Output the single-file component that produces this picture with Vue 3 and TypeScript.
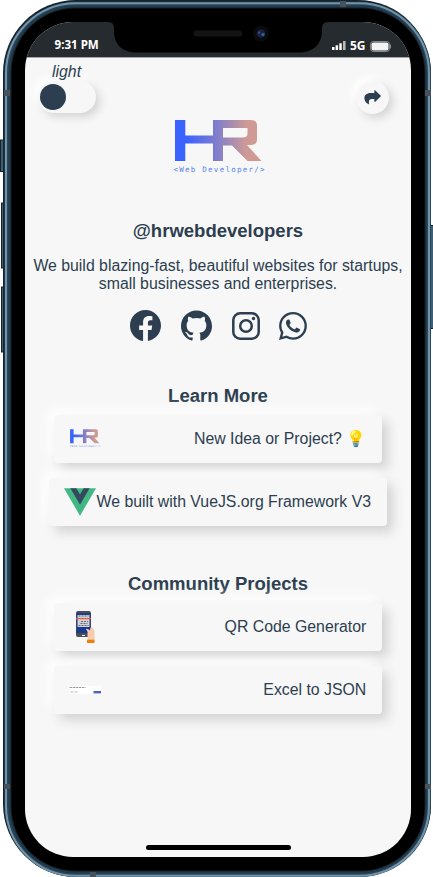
<script setup lang="ts">
import { ref } from 'vue'

interface LinkItem {
  label: string
  icon: 'hr' | 'vue' | 'qr' | 'json'
  wide?: boolean
}

interface Section {
  title: string
  links: LinkItem[]
}

const dark = ref(false)

const sections: Section[] = [
  {
    title: 'Learn More',
    links: [
      { label: 'New Idea or Project? 💡', icon: 'hr' },
      { label: 'We built with VueJS.org Framework V3', icon: 'vue', wide: true },
    ],
  },
  {
    title: 'Community Projects',
    links: [
      { label: 'QR Code Generator', icon: 'qr' },
      { label: 'Excel to JSON', icon: 'json' },
    ],
  },
]
</script>

<template>
  <div class="device">
    <svg class="frame" viewBox="0 0 433 877" aria-hidden="true">
      <defs>
        <linearGradient id="brand" gradientUnits="userSpaceOnUse" x1="4" y1="0" x2="80" y2="0">
          <stop offset="0" stop-color="#3a62ff" />
          <stop offset="0.13" stop-color="#3a62ff" />
          <stop offset="0.55" stop-color="#8580c8" />
          <stop offset="0.92" stop-color="#cf9a94" />
          <stop offset="1" stop-color="#cf9a94" />
        </linearGradient>
        <symbol id="hr-mark" viewBox="0 0 92 56">
          <path
            fill="url(#brand)"
            fill-rule="evenodd"
            d="M2 1h10.300v15.500H40V1h38q6 0 6 5.500V20q0 6-6 6h-4l14.500 16H74.500L59 26.500h-9V42H40V24.500H12.300V42H2zM50 9v9.500h20q4.500 0 4.500-4V9z"
          />
          <text x="0.500" y="53" font-size="7.500" textLength="91" font-family="'DejaVu Sans Mono', monospace" fill="#5584ee">&lt;Web Developer/&gt;</text>
        </symbol>
      </defs>
      <g fill="#3f5f75" stroke="#16222b" stroke-width="1">
        <rect x="0.500" y="140" width="5" height="31.500" />
        <rect x="1.500" y="203" width="4" height="65" />
        <rect x="1.500" y="287" width="4" height="65" />
        <rect x="430" y="225.500" width="4" height="103" />
      </g>
      <rect x="3" y="0" width="428" height="877" rx="73" fill="#17242e" />
      <rect x="4.500" y="1.800" width="426.500" height="875.200" rx="71.500" fill="#27485d" />
      <rect x="6" y="3.300" width="423" height="872.400" rx="70" fill="none" stroke="#7593a7" stroke-width="2" />
      <rect x="8.500" y="5.500" width="418.500" height="868" rx="67" fill="#213b4d" />
      <rect x="10.500" y="7.500" width="415" height="864" rx="65" fill="#1b1d20" />
      <rect x="11.500" y="8.500" width="413" height="862" rx="64" fill="#000" />
      <g fill="#46535c">
        <rect x="340" y="1" width="6" height="6" />
        <rect x="4" y="90" width="6" height="6" />
        <rect x="425" y="90" width="6" height="6" />
        <rect x="4" y="784" width="6" height="5" />
        <rect x="425" y="784" width="6" height="5" />
        <rect x="90" y="872" width="6" height="5" />
      </g>
    </svg>

    <div class="screen">
      <div class="status">
        <span class="clock">9:31 PM</span>
        <svg class="notch" viewBox="0 0 220 31" aria-hidden="true">
          <path d="M0 0Q6 0 6 6V9C6 23 15 30.500 29 30.500H191C205 30.500 214 22 214 9V6Q214 0 220 0z" />
          <rect x="85.500" y="8.500" width="49" height="6" rx="3" fill="#141414" />
          <circle cx="153" cy="11.500" r="8" fill="#0b0b0e" />
          <circle cx="153" cy="11.500" r="4.300" fill="#18233f" />
          <circle cx="155" cy="12.500" r="1.600" fill="#28689a" />
          <circle cx="151" cy="10.500" r="1.300" fill="#493f80" />
        </svg>
        <div class="signals">
          <svg width="14" height="9" viewBox="0 0 14 9" aria-hidden="true">
            <path fill="#fff" d="M0 6h2.500v3H0zM3.600 4.300h2.500V9H3.600zM7.300 2.300h2.500V9H7.300z" />
            <path fill="#b9bbbc" d="M11 0h2.600v9H11z" />
          </svg>
          <span>5G</span>
          <svg width="22" height="11" viewBox="0 0 22 11" aria-hidden="true">
            <rect x="0.500" y="0.500" width="19" height="10" rx="2.800" fill="none" stroke="#85898b" />
            <rect x="1.500" y="1.500" width="17" height="8" rx="1.800" fill="#f3f3f3" />
            <path d="M20.500 3.500v4" stroke="#85898b" />
          </svg>
        </div>
      </div>

      <main class="page">
        <div class="toolbar">
          <div class="theme">
            <em>{{ dark ? 'dark' : 'light' }}</em>
            <button class="toggle" :class="{ on: dark }" aria-label="Theme" @click="dark = !dark"><i></i></button>
          </div>
          <button class="share" aria-label="Share">
            <svg width="17" height="15" viewBox="0 0 17 15">
              <path fill="#2c3e50" d="M10.300.4q.5-.5 1 0l5.300 5.200q.5.500 0 1l-5.300 5.100q-1 .6-1-.6V9H7.800C5.500 9 4.600 10.200 5 13.700c.1.700-.4.700-.8.400C1.500 12.400.2 10 .4 7.700.7 4.700 3.300 3.100 7 3.100h3.300z" />
            </svg>
          </button>
        </div>

        <svg class="logo"><use href="#hr-mark" /></svg>
        <h1>@hrwebdevelopers</h1>
        <p>We build blazing-fast, beautiful websites for startups, small businesses and enterprises.</p>

        <nav class="social">
          <svg class="facebook" viewBox="0 0 16 16" aria-label="Facebook">
            <path d="M16 8.049c0-4.446-3.582-8.050-8-8.050C3.580 0-.002 3.603-.002 8.050c0 4.017 2.926 7.347 6.750 7.951v-5.625h-2.030V8.050H6.750V6.275c0-2.017 1.195-3.131 3.022-3.131.876 0 1.791.157 1.791.157v1.980h-1.009c-.993 0-1.303.621-1.303 1.258v1.510h2.218l-.354 2.326H9.250V16c3.824-.604 6.750-3.934 6.750-7.951z" />
          </svg>
          <svg class="github" viewBox="0 0 24 24" aria-label="GitHub">
            <path d="M12 .297c-6.630 0-12 5.373-12 12 0 5.303 3.438 9.800 8.205 11.385.6.113.82-.258.82-.577 0-.285-.01-1.040-.015-2.040-3.338.724-4.042-1.610-4.042-1.610C4.422 18.070 3.633 17.700 3.633 17.700c-1.087-.744.084-.729.084-.729 1.205.084 1.838 1.236 1.838 1.236 1.070 1.835 2.809 1.305 3.495.998.108-.776.417-1.305.76-1.605-2.665-.3-5.466-1.332-5.466-5.930 0-1.310.465-2.380 1.235-3.220-.135-.303-.54-1.523.105-3.176 0 0 1.005-.322 3.300 1.230.96-.267 1.980-.399 3-.405 1.020.006 2.040.138 3 .405 2.280-1.552 3.285-1.230 3.285-1.230.645 1.653.24 2.873.12 3.176.765.84 1.230 1.910 1.230 3.220 0 4.610-2.805 5.625-5.475 5.920.42.36.81 1.096.81 2.220 0 1.606-.015 2.896-.015 3.286 0 .315.21.69.825.57C20.565 22.092 24 17.592 24 12.297c0-6.627-5.373-12-12-12" />
          </svg>
          <svg class="instagram" viewBox="0 0 28 28" aria-label="Instagram">
            <rect x="1.300" y="1.300" width="25.400" height="25.400" rx="6.800" fill="none" stroke="#2c3e50" stroke-width="2.500" />
            <circle cx="14" cy="14" r="5.800" fill="none" stroke="#2c3e50" stroke-width="2.500" />
            <circle cx="21.500" cy="6.500" r="1.700" />
          </svg>
          <svg class="whatsapp" viewBox="0 0 16 16" aria-label="WhatsApp">
            <path d="M13.601 2.326A7.854 7.854 0 0 0 7.994 0C3.627 0 .068 3.558.064 7.926c0 1.399.366 2.760 1.057 3.965L0 16l4.204-1.102a7.933 7.933 0 0 0 3.790.965h.004c4.368 0 7.926-3.558 7.930-7.930A7.898 7.898 0 0 0 13.600 2.326zM7.994 14.521a6.573 6.573 0 0 1-3.356-.92l-.24-.144-2.494.654.666-2.433-.156-.251a6.560 6.560 0 0 1-1.007-3.505c0-3.626 2.957-6.584 6.591-6.584a6.560 6.560 0 0 1 4.660 1.931 6.557 6.557 0 0 1 1.928 4.660c-.004 3.639-2.961 6.592-6.592 6.592zm3.615-4.934c-.197-.099-1.170-.578-1.353-.646-.182-.065-.315-.099-.445.099-.133.197-.513.646-.627.775-.114.133-.232.148-.43.050-.197-.1-.836-.308-1.592-.985-.59-.525-.985-1.175-1.103-1.372-.114-.198-.011-.304.088-.403.087-.088.197-.232.296-.346.1-.114.133-.198.198-.33.065-.134.034-.248-.015-.347-.05-.099-.445-1.076-.612-1.470-.16-.389-.323-.335-.445-.34-.114-.007-.247-.007-.38-.007a.729.729 0 0 0-.529.247c-.182.198-.691.677-.691 1.654 0 .977.71 1.916.81 2.049.098.133 1.394 2.132 3.383 2.992.47.205.84.326 1.129.418.475.152.904.129 1.246.08.38-.058 1.171-.48 1.338-.943.164-.464.164-.86.114-.943-.049-.084-.182-.133-.38-.232z" />
          </svg>
        </nav>

        <section v-for="section in sections" :key="section.title">
          <h2>{{ section.title }}</h2>
          <a v-for="link in section.links" :key="link.label" class="card" :class="{ wide: link.wide }">
            <svg v-if="link.icon === 'hr'" class="thumb hr"><use href="#hr-mark" /></svg>
            <svg v-else-if="link.icon === 'vue'" class="thumb" viewBox="0 0 32 32">
              <path fill="#41b883" d="M0 2.200h32L16 29.800z" />
              <path fill="#34495e" d="M6.400 2.200h5.900L16 8.600l3.700-6.400h5.900L16 18.800z" />
            </svg>
            <svg v-else-if="link.icon === 'qr'" class="thumb" viewBox="0 0 32 32">
              <rect x="7" width="15" height="26" rx="2" fill="#4c4e55" />
              <path fill="#183a91" d="M7.500 2.300h14V22h-14z" />
              <path fill="#cfd1d5" d="M8.500 4h12v12h-12z" />
              <path stroke="#696b72" stroke-dasharray="2 1" d="M9.500 5h10M12 10.500h7M11.500 12.500h7M9.500 14.500h10" />
              <path stroke="#f05a45" stroke-width="1.200" d="M7 7.600h15" />
              <path stroke="#fff" d="M13 24.500h3" />
              <path fill="#f5cdac" d="M17 18q2-.8 3.500 1.500l1.500-3.500q4 1.500 3.500 6v7H18.500v-5q1-3-1.500-6z" />
              <path fill="#f07d12" d="M18 28.700h7.500V32H18z" />
            </svg>
            <svg v-else class="thumb" viewBox="0 0 32 32">
              <path fill="#fff" d="M0 12h32v8H0z" />
              <path stroke="#8e8e94" stroke-width="0.900" stroke-dasharray="2.500 .6" d="M.5 13.500h16" />
              <path stroke="#b4b4b8" stroke-width="0.900" stroke-dasharray="3 1" d="M1.500 18h7.500" />
              <path fill="#4b62c2" d="M24.500 17H32v2.400h-7.500z" />
            </svg>
            <span>{{ link.label }}</span>
          </a>
        </section>
        <div class="home-bar"></div>
      </main>
    </div>
  </div>
</template>

<style>
body {
  background: #fff;
  overflow: hidden;
}
</style>

<style scoped>
* {
  box-sizing: border-box;
}
.device {
  position: relative;
  width: 433px;
  height: 877px;
  padding: 22px 22px 20px 25px;
  font: 15.840px/18px 'Liberation Sans', Arial, sans-serif;
  color: #2c3e50;
}
.frame {
  position: absolute;
  inset: 0;
  width: 433px;
  height: 877px;
}
.screen {
  position: relative;
  display: flex;
  flex-direction: column;
  width: 386px;
  height: 835px;
  overflow: hidden;
  border-radius: 48px;
  background: #f7f7f7;
}
.status {
  display: flex;
  height: 35.500px;
  flex: none;
  background: #262b2f;
  border-bottom: 1px solid #aaa3a7;
  color: #fff;
  font: bold 12px/16px 'Noto Sans', 'Open Sans', sans-serif;
}
.clock {
  width: 83px;
  flex: none;
  padding: 15px 0 0 29.500px;
  white-space: nowrap;
  font-size: 11.600px;
}
.notch {
  width: 220px;
  height: 31px;
  flex: none;
}
.signals {
  display: flex;
  gap: 4px;
  width: 83px;
  padding: 16px 0 0 4px;
}
.signals svg {
  flex: none;
  margin-top: 3px;
}
.signals span {
  line-height: 15px;
}
.page {
  display: flex;
  flex: 1;
  flex-direction: column;
  align-items: center;
  padding-top: 5px;
}
.toolbar {
  display: flex;
  justify-content: space-between;
  width: 100%;
  height: 56.500px;
  padding: 0 22.500px 0 12.500px;
}
em {
  display: block;
  height: 18.500px;
  padding-left: 14.500px;
}
button {
  display: block;
  border: 0;
  background: #f7f7f7;
  box-shadow: 4px 4px 8px #d4d4d4, -4px -4px 8px #fff;
}
.toggle {
  width: 58px;
  height: 32px;
  padding: 2px;
  border-radius: 16px;
}
.toggle i {
  display: block;
  width: 26px;
  height: 26px;
  border-radius: 50%;
  background: #2c3e50;
}
.toggle.on i {
  margin-left: auto;
}
.share {
  width: 33px;
  height: 33px;
  margin-top: 18.500px;
  padding: 9px 8px;
  border-radius: 50%;
}
.share svg {
  display: block;
}
.logo {
  width: 92px;
  height: 56px;
  flex: none;
  margin-left: 1px;
}
h1,
h2 {
  margin: 0;
  font-size: 18.530px;
  line-height: 22px;
}
h1 {
  margin-top: 44.500px;
}
p {
  width: 376px;
  margin: 15px 0 0;
  text-align: center;
}
.social {
  display: flex;
  align-items: center;
  height: 32px;
  margin: 17px 0 43px;
  fill: #2c3e50;
}
.facebook {
  width: 31px;
  height: 31px;
}
.github {
  width: 31px;
  height: 31px;
  margin-left: 20px;
}
.instagram {
  width: 28px;
  height: 28px;
  margin-left: 20px;
}
.whatsapp {
  width: 28px;
  height: 28px;
  margin-left: 19px;
}
section {
  display: flex;
  flex-direction: column;
  align-items: center;
  gap: 15.500px;
  margin-bottom: 47px;
}
h2 {
  margin-bottom: -7px;
}
.card {
  display: flex;
  align-items: center;
  justify-content: space-between;
  width: 328.500px;
  height: 47.500px;
  padding: 0 16px 0 15px;
  border-radius: 4px;
  background: #f7f7f7;
  box-shadow: 6px 6px 12px #d2d2d2, -6px -6px 12px #fff;
}
.card.wide {
  width: 338px;
}
.thumb {
  width: 32px;
  height: 32px;
  flex: none;
}
.thumb.hr {
  height: 19px;
}
.card span {
  white-space: nowrap;
}
.home-bar {
  width: 145px;
  height: 5px;
  margin: auto 0 7.500px;
  border-radius: 3px;
  background: #000;
}
</style>
